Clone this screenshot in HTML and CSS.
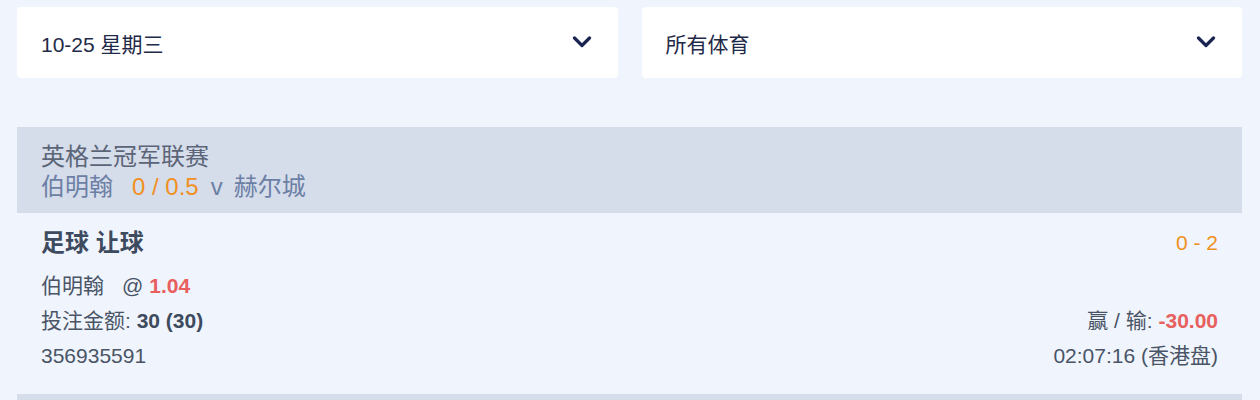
FILE: index.html
```html
<!DOCTYPE html>
<html lang="zh-CN">
<head>
<meta charset="utf-8">
<link rel="stylesheet" href="styles.css">
</head>
<body>
<div class="page">
  <div class="filters">
    <div class="select">
      <span class="select-text">10-25 星期三</span>
      <svg class="chevron" width="20" height="12" viewBox="0 0 20 12"><path d="M2.5 2 L10 9.5 L17.5 2" fill="none" stroke="#1b2552" stroke-width="3.2" stroke-linecap="round" stroke-linejoin="round"/></svg>
    </div>
    <div class="select">
      <span class="select-text">所有体育</span>
      <svg class="chevron" width="20" height="12" viewBox="0 0 20 12"><path d="M2.5 2 L10 9.5 L17.5 2" fill="none" stroke="#1b2552" stroke-width="3.2" stroke-linecap="round" stroke-linejoin="round"/></svg>
    </div>
  </div>

  <div class="league">
    <div class="league-name">英格兰冠军联赛</div>
    <div class="match">伯明翰<span class="hdp">0 / 0.5</span><span class="vs">v</span>赫尔城</div>
  </div>

  <div class="bet">
    <div class="bet-row title-row">
      <div class="bet-title">足球 让球</div>
      <div class="score">0 - 2</div>
    </div>
    <div class="bet-row">
      <div>伯明翰<span class="at">@</span><span class="odds">1.04</span></div>
      <div></div>
    </div>
    <div class="bet-row">
      <div>投注金额: <b>30 (30)</b></div>
      <div>赢 / 输: <span class="loss">-30.00</span></div>
    </div>
    <div class="bet-row">
      <div>356935591</div>
      <div>02:07:16 (香港盘)</div>
    </div>
  </div>

  <div class="league next"></div>
</div>
</body>
</html>
```

FILE: styles.css
```css
* { box-sizing: border-box; }
html, body {
  margin: 0;
  padding: 0;
  background: #eff4fd;
  font-family: "Liberation Sans", Arial, "Noto Sans CJK SC", sans-serif;
  color: #4a5466;
}
.page {
  padding: 7px 18px 0 17px;
}
.filters {
  display: grid;
  grid-template-columns: 1fr 1fr;
  gap: 24px;
}
.select {
  height: 71px;
  background: #ffffff;
  border-radius: 4px;
  display: flex;
  align-items: center;
  justify-content: space-between;
  padding: 0 26px 0 24px;
}
.select-text {
  font-size: 21px;
  color: #1f2a48;
}
.chevron { display: block; margin-top: -1px; }
.league {
  margin-top: 49px;
  background: #d5dcea;
  padding: 15px 24px 11px;
  font-size: 24px;
  line-height: 30px;
}
.league-name { color: #5b6577; }
.match { color: #6c7fa5; }
.hdp { color: #f0901f; margin-left: 19px; }
.vs { margin: 0 11px 0 12px; }
.bet {
  padding: 15px 24px 21px;
}
.bet-row {
  display: flex;
  justify-content: space-between;
  font-size: 21px;
  line-height: 35px;
  color: #4a5466;
}
.title-row {
  line-height: 30px;
  margin-bottom: 10px;
}
.bet-title {
  font-size: 24px;
  font-weight: bold;
  color: #3e4a5e;
}
.score { color: #f0901f; font-size: 21px; }
.at { margin-left: 18px; margin-right: 6px; }
.odds, .loss { color: #e8605e; font-weight: bold; }
.bet-row b { color: #3e4a5e; }
.next { margin-top: 0; height: 6px; padding: 0; }
```
